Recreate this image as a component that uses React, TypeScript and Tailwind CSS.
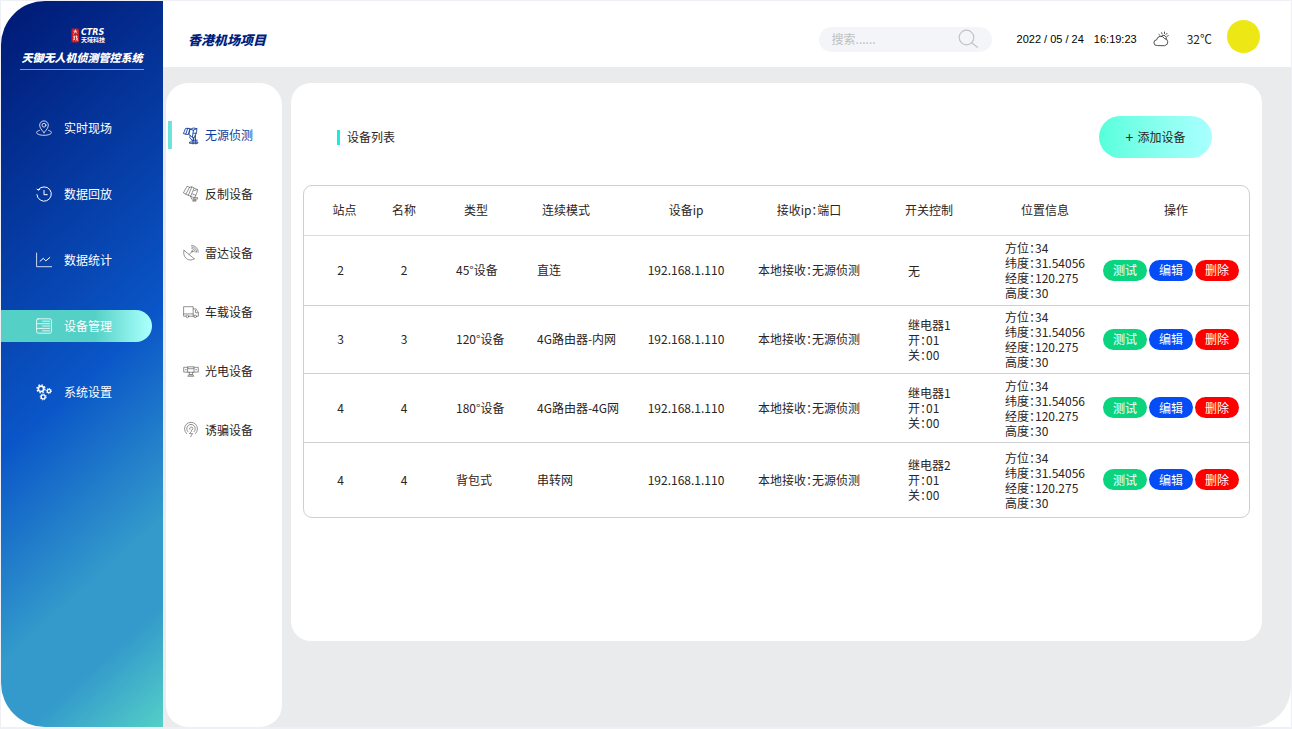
import React from "react";

const svgProps = {
  viewBox: "0 0 16 16",
  fill: "none",
  stroke: "currentColor",
  strokeLinecap: "round",
  strokeLinejoin: "round",
  "aria-hidden": true,
} as const;

const Icon = ({ children, width = 0.8 }: any) => (
  <svg {...svgProps} strokeWidth={width} className="h-4 w-4 shrink-0 overflow-visible">
    {children}
  </svg>
);

const PinIcon = () => (
  <Icon>
    <path d="M8 12.6C5.4 9.8 3.7 7.6 3.7 5.2a4.3 4.3 0 0 1 8.6 0c0 2.4-1.7 4.6-4.3 7.4z" />
    <circle cx="8" cy="5.2" r="1.9" />
    <path d="M3.4 10.4C1.6 10.9.6 11.6.6 12.5c0 1.6 3.3 2.8 7.4 2.8s7.4-1.2 7.4-2.8c0-.9-1-1.6-2.8-2.1" />
  </Icon>
);

const HistoryIcon = () => (
  <Icon width={1}>
    <path d="M2.3 3.7A7.2 7.2 0 1 1 .9 8.7" />
    <path d="M1 3.2l1.4.9 1.5-.8" />
    <path d="M8 4.5v4.2h3.3" />
  </Icon>
);

const ChartIcon = () => (
  <Icon>
    <path d="M.6 1v13.7h15" />
    <path d="M4 9.3l3.3-3 2.5 2.6 4-3.4" strokeWidth="1" />
  </Icon>
);

const ListIcon = () => (
  <Icon>
    <rect x=".6" y=".8" width="14.8" height="14.4" rx="1.5" />
    <path d="M.8 5.7h4.6M.8 10.4h4.6M6.6 3.2h7M5.4 5.7h8.2M6.6 8h7M5.4 10.4h8.2M6.6 12.8h7" />
  </Icon>
);

const GearsIcon = () => (
  <Icon width={1.7}>
    <circle cx="5" cy="4.8" r="2.7" />
    <circle cx="5" cy="4.8" r="4" strokeWidth="1.4" strokeDasharray="1.5 1.64" strokeLinecap="butt" />
    <circle cx="12.9" cy="7" r="1.7" strokeWidth="1.3" />
    <circle cx="12.9" cy="7" r="2.6" strokeWidth="1" strokeDasharray="1 1.04" strokeLinecap="butt" />
    <circle cx="7.2" cy="12.9" r="2" strokeWidth="1.4" />
    <circle cx="7.2" cy="12.9" r="3" strokeWidth="1" strokeDasharray="1.2 1.16" strokeLinecap="butt" />
  </Icon>
);

const DetectIcon = () => (
  <Icon width={0.9}>
    <path d="M2.4 1.8L.4 6.6l2.3.6 2-5.6zM4.700 1.600L7 1.300 5.300 7.500l-2.600-.3" />
    <path d="M7.400 2.300L10.200 1l3.700.6-.3 3.100-1 2.900-2 4.200-3.400-3.500-1-.6zM7.400 2.300l3 .9 3.400-1.600M10.400 3.200l-.9 6.500" />
    <path d="M7.200 8.300l-.4 2.600 2.300 2.300M10.600 6.300h2.800M12.400 8.200v5.100M10.400 10.500v3" />
    <path d="M8.700 13.200h5.600M7 15h7.800v1.300H7zM10 13.300V17M12.800 13.300V17" />
  </Icon>
);

const CounterIcon = () => (
  <Icon width={0.7}>
    <path d="M3.900.5L.4 6.900l2.400 1.400L6.400 1.500zM6.400 1.500L8.900.8 5.300 9.300 2.800 8.300M8.900.8l2.200 1.300-3.500 8.200-2.300-1" />
    <path d="M11.100 2.100l3.400 1.400-.4 2.600-2.500 5.700-4-1.500M14.500 3.500l-3.700 1.300M12.700 9.300L9.500 8" />
    <path d="M7.800 10.500l.9 2.600h5.900v-1.500h-2.800M10.900 12v3.500M9.300 14.800h3.900M12.300 13.100v2" />
  </Icon>
);

const RadarIcon = () => (
  <Icon width={0.7}>
    <path d="M1 5.300l10.300 8.500M6.100 9.500l2.700-2.600" />
    <path d="M1 5.300C.2 8 .8 11 2.900 13.100c2.200 2.200 5.500 2.600 8.400.7" />
    <circle cx="9.3" cy="6.3" r=".7" />
    <path d="M8.800 3.600a3.200 3.200 0 0 1 3.400 3.500M8.700 2a4.800 4.800 0 0 1 5 5.200M8.600.5a6.400 6.400 0 0 1 6.700 6.800" />
  </Icon>
);

const TruckIcon = () => (
  <Icon width={0.7}>
    <path d="M3 12.200H.6V2.700h9.600v9.500H5.800M10.200 4.900h2.800l2.400 3.500v3.800h-1.600M10.200 12.200h1M12.500 6.200v2.500h2.700M.6 9.900h9.600" />
    <circle cx="4.4" cy="12.4" r="1.3" />
    <circle cx="12.2" cy="12.4" r="1.3" />
  </Icon>
);

const CameraIcon = () => (
  <Icon width={0.7}>
    <path d="M5 4.300H.7v4.800H5M11 4.300h4.300v4.800H11M5 3.800h6v5.500H5zM5 5.700h6M2.300 6.700h1M12.700 6.700h1M6.400 9.300v2.500h3.200V9.300M5.200 13.300h5.600l-.8-1.500H6z" />
  </Icon>
);

const SpoofIcon = () => (
  <Icon width={0.7}>
    <path d="M3.600 11.600a6.500 6.500 0 1 1 8.800 0M4.900 9.700a4.300 4.300 0 1 1 6.200 0" />
    <path d="M6.700 7.200a1.600 1.600 0 1 1 1.600 1v1.400l-1.900 2h3.200L7.600 14.700" />
  </Icon>
);

const Logo = () => (
  <svg viewBox="0 0 36 15" className="ml-3.5 h-[15px] w-9" role="img" aria-label="CTRS 天域科技">
    <rect x="0.5" y="0.5" width="7.5" height="14" rx="1" fill="#c81c24" />
    <path
      d="M2.500 3.200h3.700M4.400 1.600c0 2-.5 3.300-2 4.400M4.300 3.500l1.800 2M2.300 9h1.800M3.200 7.500v4.300M2 12l2-.8M4.700 8.800h2M5.300 7.300c0 2.500.3 4.200 1.700 5.500M6.500 10c-.5 1.500-1 2.200-1.800 2.800"
      fill="none"
      stroke="#fff"
      strokeWidth=".8"
    />
    <text x="10" y="6.5" fill="#fff" className="font-['DejaVu_Sans',sans-serif] text-[8px] font-bold italic">
      CTRS
    </text>
    <text x="10" y="13.5" fill="#fff" className="font-['Noto_Sans_CJK_SC',sans-serif] text-[6px] font-bold">
      天域科技
    </text>
  </svg>
);

const WeatherIcon = () => (
  <Icon>
    <path d="M4 14.600a2.900 2.900 0 0 1-.3-5.800 4.100 4.100 0 0 1 7.700-1.300 3.600 3.600 0 0 1 .6 7.100z" />
    <path d="M8.300 5.200a3 3 0 0 1 5 3M5.900 3.500l1 .8M8.600 1.700l.5 1.200M11.500 1v1.500M14 2.300l-.9 1.100M15.300 4.700l-1.200.5" />
  </Icon>
);

const SearchIcon = () => (
  <svg viewBox="0 0 20 20" className="h-5 w-5" fill="none" stroke="#c3c3c5" strokeWidth="1.2" aria-hidden>
    <circle cx="8.5" cy="8.5" r="7.3" />
    <path d="M13.5 13.8l6 4.5" strokeLinecap="round" />
  </svg>
);

const menu = [
  { label: "实时现场", icon: PinIcon },
  { label: "数据回放", icon: HistoryIcon },
  { label: "数据统计", icon: ChartIcon },
  { label: "设备管理", icon: ListIcon, active: true },
  { label: "系统设置", icon: GearsIcon },
];

const subMenu = [
  { label: "无源侦测", icon: DetectIcon, active: true },
  { label: "反制设备", icon: CounterIcon },
  { label: "雷达设备", icon: RadarIcon },
  { label: "车载设备", icon: TruckIcon },
  { label: "光电设备", icon: CameraIcon },
  { label: "诱骗设备", icon: SpoofIcon },
];

const position = ["方位：34", "纬度：31.54056", "经度：120.275", "高度：30"];

const devices = [
  { site: 2, name: 2, type: "45°设备", mode: "直连", control: ["无"], height: "h-[70px]" },
  { site: 3, name: 3, type: "120°设备", mode: "4G路由器-内网", control: ["继电器1", "开：01", "关：00"], height: "h-[68px]" },
  { site: 4, name: 4, type: "180°设备", mode: "4G路由器-4G网", control: ["继电器1", "开：01", "关：00"], height: "h-[69px]" },
  { site: 4, name: 4, type: "背包式", mode: "串转网", control: ["继电器2", "开：01", "关：00"], height: "h-[75px]" },
];

const actions = [
  { label: "测试", color: "bg-[#0bd47e]" },
  { label: "编辑", color: "bg-[#044cf6]" },
  { label: "删除", color: "bg-[#fe0000]" },
];

const Sidebar = () => (
  <aside className="flex w-[162px] shrink-0 flex-col rounded-l-[44px] bg-[linear-gradient(138deg,#001873_0%,#0a56c8_52%,#339acb_76%,#339acb_86%,#54cfc7_100%)] pt-[27px] text-white">
    <div className="mx-auto flex w-[124px] flex-col items-center border-b border-[#7d9bd0] pb-1">
      <Logo />
      <h1 className="mt-1.5 whitespace-nowrap text-[11px] leading-4 font-black italic">
        天御无人机侦测管控系统
      </h1>
    </div>
    <nav className="mt-[42px] flex flex-col gap-[34px]">
      {menu.map(({ label, icon: MenuIcon, active }) => (
        <a
          key={label}
          href="#"
          className={`mr-[11px] flex h-8 items-center gap-3 rounded-r-full pl-[35px] ${
            active ? "bg-[linear-gradient(90deg,#55d0c6_62%,#a8fffb_98%)]" : ""
          }`}
        >
          <MenuIcon />
          {label}
        </a>
      ))}
    </nav>
  </aside>
);

const SubMenu = () => (
  <nav className="flex w-[116px] shrink-0 flex-col gap-[31px] rounded-[22px] bg-white pt-[38px] pl-0.5">
    {subMenu.map(({ label, icon: MenuIcon, active }) => (
      <a
        key={label}
        href="#"
        className={`flex h-7 items-center gap-1.5 border-l-4 pl-[11px] ${
          active ? "border-[#6de3da] text-[#123c9c]" : "border-transparent"
        }`}
      >
        <span className={active ? "" : "text-[#666]"}>
          <MenuIcon />
        </span>
        {label}
      </a>
    ))}
  </nav>
);

const Header = () => (
  <header className="flex h-[66px] items-center bg-white pt-1 pr-[31px] pl-[25px]">
    <h2 className="pt-2 text-[13px] leading-5 font-black text-[#001f80] italic">香港机场项目</h2>
    <div className="ml-auto flex items-center pt-1.5">
      <label className="flex h-[25px] w-[173px] items-center rounded-full bg-[#f4f5f9] pr-3.5 pl-[13px]">
        <input
          type="text"
          aria-label="搜索"
          placeholder="搜索......"
          className="min-w-0 flex-1 bg-transparent outline-none placeholder:text-[#bfbfc0]"
        />
        <SearchIcon />
      </label>
      <time className="ml-[25px] flex gap-2.5 font-['Liberation_Sans',Arial,sans-serif] text-[11px] text-black">
        <span>2022 / 05 / 24</span>
        <span>16:19:23</span>
      </time>
      <span className="ml-4 flex items-center gap-[18px]">
        <WeatherIcon />
        32℃
      </span>
    </div>
    <span className="ml-[15px] h-[33px] w-[33px] rounded-full bg-[#ede715]"></span>
  </header>
);

const DeviceTable = () => (
  <div className="mt-[27px] rounded-[9px] border border-[#cfcfd1]">
    <table className="w-full table-fixed text-left whitespace-nowrap">
      <colgroup>
        <col className="w-[73px]" />
        <col className="w-[54px]" />
        <col className="w-[90px]" />
        <col className="w-[108px]" />
        <col className="w-[114px]" />
        <col className="w-[132px]" />
        <col className="w-[120px]" />
        <col className="w-[100px]" />
        <col className="w-[154px]" />
      </colgroup>
      <thead>
        <tr className="h-[49px] border-b border-[#dcdcde] *:font-normal">
          <th className="pl-2 text-center">站点</th>
          <th className="text-center">名称</th>
          <th className="text-center">类型</th>
          <th className="pl-[21px]">连续模式</th>
          <th className="text-center">设备ip</th>
          <th className="text-center">接收ip：端口</th>
          <th className="pl-[30px]">开关控制</th>
          <th className="text-center">位置信息</th>
          <th className="pl-2 text-center">操作</th>
        </tr>
      </thead>
      <tbody>
        {devices.map((d, i) => (
          <tr key={i} className={`${d.height} border-b border-[#cfcfd1] last:border-b-0`}>
            <td className="text-center">{d.site}</td>
            <td className="text-center">{d.name}</td>
            <td className="pl-[25px]">{d.type}</td>
            <td className="pl-4">{d.mode}</td>
            <td className="text-center">192.168.1.110</td>
            <td className="text-center">本地接收：无源侦测</td>
            <td className="pl-[33px] leading-[15px]">
              {d.control.map((line) => (
                <p key={line}>{line}</p>
              ))}
            </td>
            <td className="pl-2.5 leading-[15px]">
              {position.map((line) => (
                <p key={line}>{line}</p>
              ))}
            </td>
            <td className="pl-2">
              <div className="flex gap-0.5">
                {actions.map((a) => (
                  <button key={a.label} type="button" className={`h-[21px] w-11 rounded-full text-white ${a.color}`}>
                    {a.label}
                  </button>
                ))}
              </div>
            </td>
          </tr>
        ))}
      </tbody>
    </table>
  </div>
);

const App = () => {
  return (
    <div
      lang="zh-CN"
      className="flex min-h-screen border border-b-2 border-[#eff0f5] bg-white font-['Noto_Sans_CJK_SC',sans-serif] text-xs text-[#2b2523] [font-feature-settings:'halt']"
    >
      <Sidebar />
      <div className="flex min-w-0 flex-1 flex-col">
        <Header />
        <div className="flex flex-1 rounded-br-[40px] bg-[#e9ebed] pt-4 pr-[29px] pl-[3px]">
          <SubMenu />
          <main className="mb-[86px] ml-[9px] min-w-0 flex-1 rounded-[20px] bg-white px-3 pt-[33px]">
            <div className="flex items-center justify-between pr-[38px] pl-[34px]">
              <h3 className="flex items-center gap-[7px]">
                <span className="h-[15px] w-[3px] bg-[#12efdf]"></span>
                设备列表
              </h3>
              <button
                type="button"
                className="flex h-[42px] w-[113px] items-center justify-center gap-1 rounded-full bg-linear-to-r from-[#55ffdc] to-[#a9ffff]"
              >
                <span className="text-sm">+</span>
                添加设备
              </button>
            </div>
            <DeviceTable />
          </main>
        </div>
      </div>
    </div>
  );
};

export default App;
